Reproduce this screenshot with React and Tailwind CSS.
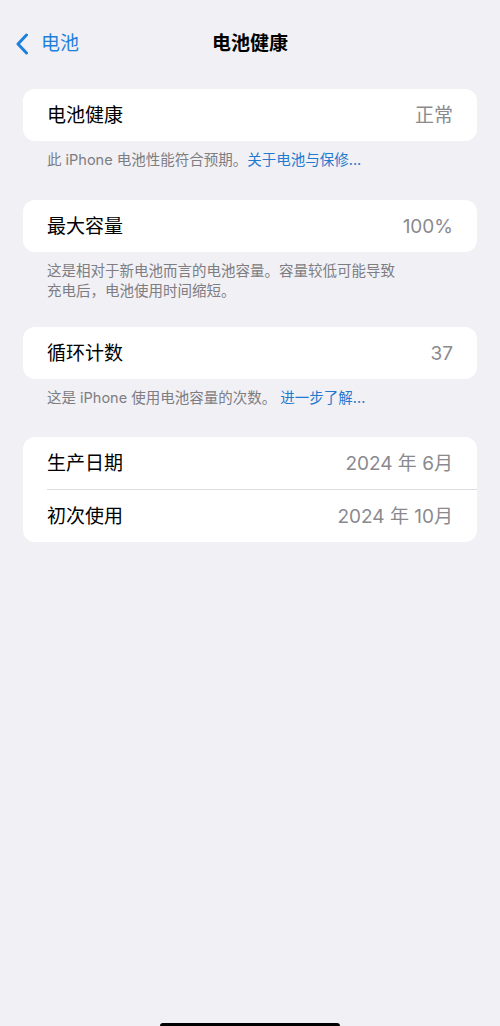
import React from 'react'

const font = { fontFamily: 'Inter, "Noto Sans CJK SC", sans-serif' }

function Row({ label, value }) {
  return (
    <div className="flex h-[52px] items-center justify-between pl-6 pr-6 pt-[3px]">
      <span className="text-[19px] text-black">{label}</span>
      <span className="text-[19px] text-[#8a8a8e]">{value}</span>
    </div>
  )
}

function Card({ children }) {
  return <div className="mx-[23px] overflow-hidden rounded-[12px] bg-white">{children}</div>
}

function Note({ children }) {
  return (
    <p className="mx-[47px] mt-[9px] text-[14.5px] leading-[20px] text-[#7d7d82]">{children}</p>
  )
}

export default function App() {
  return (
    <div className="relative flex h-[1026px] w-[500px] flex-col overflow-hidden bg-[#f1f0f5]" style={font}>
      {/* nav bar */}
      <div className="relative mt-[24px] flex h-[38px] items-center pt-[2px]">
        <div className="flex items-center pl-[15px] text-[#1f80db]">
          <svg width="14" height="22" viewBox="0 0 14 22" fill="none">
            <path d="M11.5 2 L3 11 L11.5 20" stroke="currentColor" strokeWidth="3" strokeLinecap="round" strokeLinejoin="round" />
          </svg>
          <span className="ml-[12px] text-[19px]">电池</span>
        </div>
        <h1 className="absolute left-1/2 -translate-x-1/2 text-[19px] font-semibold text-black">电池健康</h1>
      </div>

      <div className="mt-[27px]">
        <Card>
          <Row label="电池健康" value="正常" />
        </Card>
        <Note>
          此 iPhone 电池性能符合预期。<span className="text-[#1f7ad0]">关于电池与保修...</span>
        </Note>
      </div>

      <div className="mt-[30px]">
        <Card>
          <Row label="最大容量" value="100%" />
        </Card>
        <Note>
          这是相对于新电池而言的电池容量。容量较低可能导致
          <br />
          充电后，电池使用时间缩短。
        </Note>
      </div>

      <div className="mt-[26px]">
        <Card>
          <Row label="循环计数" value="37" />
        </Card>
        <Note>
          这是 iPhone 使用电池容量的次数。 <span className="text-[#1f7ad0]">进一步了解...</span>
        </Note>
      </div>

      <div className="mt-[29px]">
        <Card>
          <Row label="生产日期" value="2024 年 6月" />
          <div className="ml-6 h-px bg-[#dcdce0]" />
          <Row label="初次使用" value="2024 年 10月" />
        </Card>
      </div>

      <div className="absolute bottom-[-3px] left-[160px] h-[6px] w-[180px] rounded-full bg-black" />
    </div>
  )
}
